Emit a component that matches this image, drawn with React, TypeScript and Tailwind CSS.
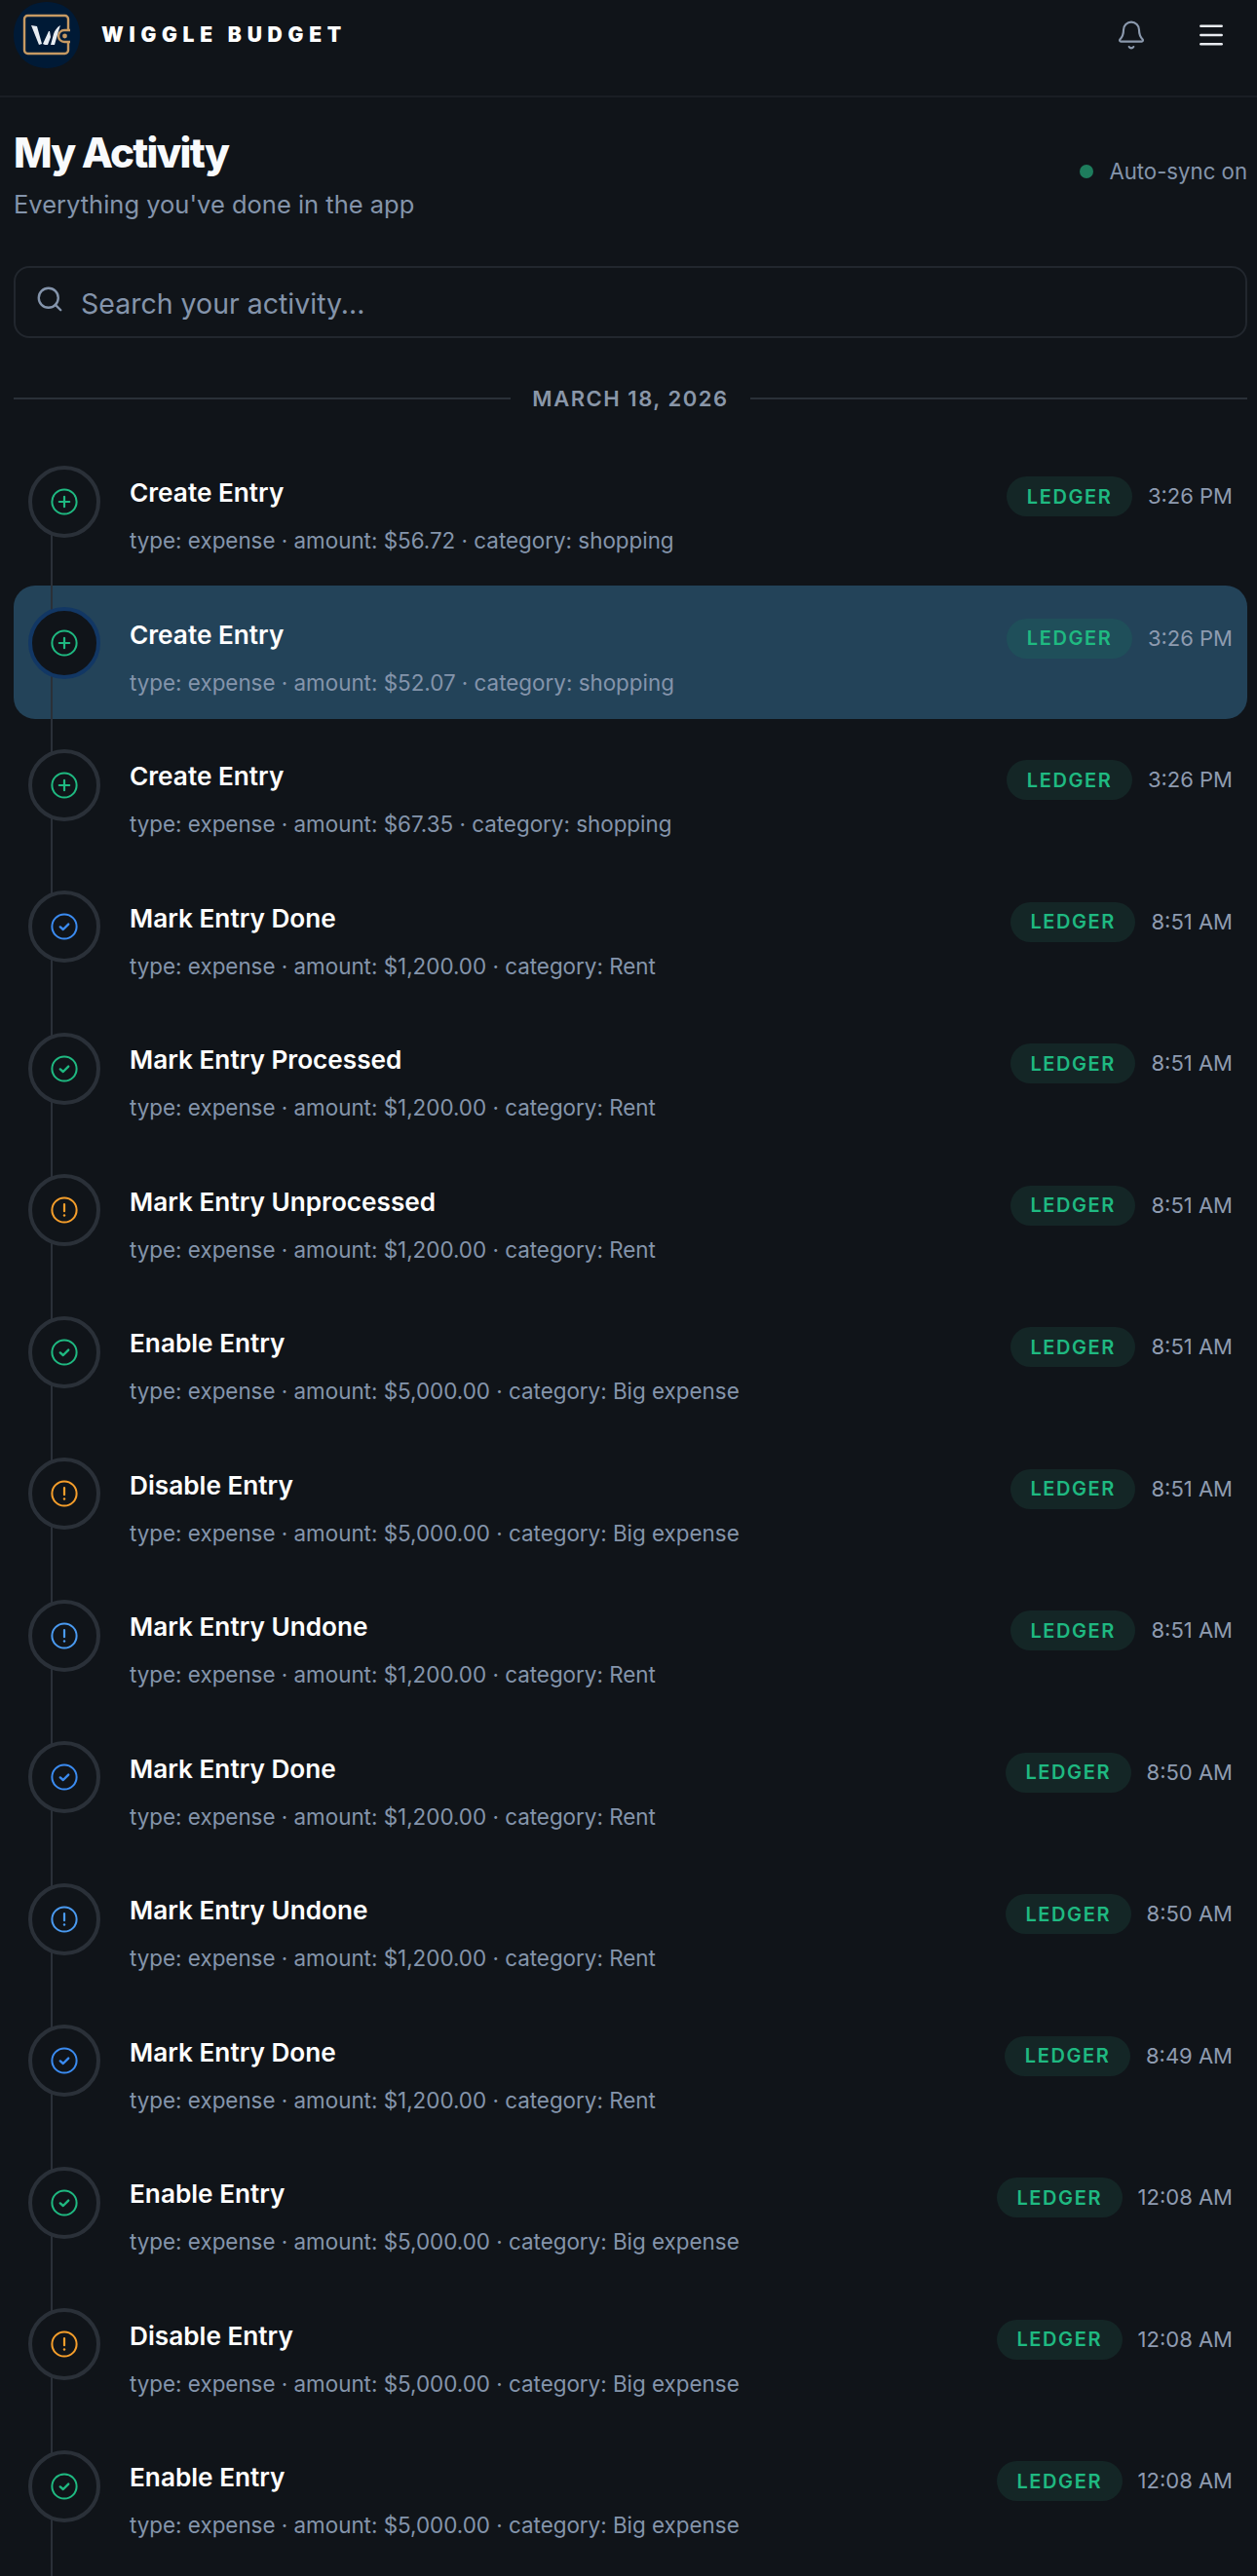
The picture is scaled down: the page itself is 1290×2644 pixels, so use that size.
import { Bell, Menu, Search } from 'lucide-react';

type Kind = 'plus' | 'check' | 'alert';

const rows: { title: string; detail: string; time: string; kind: Kind; color: string; active?: boolean }[] = [
  { title: 'Create Entry', detail: 'type: expense · amount: $56.72 · category: shopping', time: '3:26 PM', kind: 'plus', color: 'text-[#1fb981]' },
  { title: 'Create Entry', detail: 'type: expense · amount: $52.07 · category: shopping', time: '3:26 PM', kind: 'plus', color: 'text-[#1fb981]', active: true },
  { title: 'Create Entry', detail: 'type: expense · amount: $67.35 · category: shopping', time: '3:26 PM', kind: 'plus', color: 'text-[#1fb981]' },
  { title: 'Mark Entry Done', detail: 'type: expense · amount: $1,200.00 · category: Rent', time: '8:51 AM', kind: 'check', color: 'text-[#3b8bf0]' },
  { title: 'Mark Entry Processed', detail: 'type: expense · amount: $1,200.00 · category: Rent', time: '8:51 AM', kind: 'check', color: 'text-[#1fb981]' },
  { title: 'Mark Entry Unprocessed', detail: 'type: expense · amount: $1,200.00 · category: Rent', time: '8:51 AM', kind: 'alert', color: 'text-[#f59e2b]' },
  { title: 'Enable Entry', detail: 'type: expense · amount: $5,000.00 · category: Big expense', time: '8:51 AM', kind: 'check', color: 'text-[#1fb981]' },
  { title: 'Disable Entry', detail: 'type: expense · amount: $5,000.00 · category: Big expense', time: '8:51 AM', kind: 'alert', color: 'text-[#f59e2b]' },
  { title: 'Mark Entry Undone', detail: 'type: expense · amount: $1,200.00 · category: Rent', time: '8:51 AM', kind: 'alert', color: 'text-[#4a9af0]' },
  { title: 'Mark Entry Done', detail: 'type: expense · amount: $1,200.00 · category: Rent', time: '8:50 AM', kind: 'check', color: 'text-[#3b8bf0]' },
  { title: 'Mark Entry Undone', detail: 'type: expense · amount: $1,200.00 · category: Rent', time: '8:50 AM', kind: 'alert', color: 'text-[#4a9af0]' },
  { title: 'Mark Entry Done', detail: 'type: expense · amount: $1,200.00 · category: Rent', time: '8:49 AM', kind: 'check', color: 'text-[#3b8bf0]' },
  { title: 'Enable Entry', detail: 'type: expense · amount: $5,000.00 · category: Big expense', time: '12:08 AM', kind: 'check', color: 'text-[#1fb981]' },
  { title: 'Disable Entry', detail: 'type: expense · amount: $5,000.00 · category: Big expense', time: '12:08 AM', kind: 'alert', color: 'text-[#f59e2b]' },
  { title: 'Enable Entry', detail: 'type: expense · amount: $5,000.00 · category: Big expense', time: '12:08 AM', kind: 'check', color: 'text-[#1fb981]' },
];

function RowIcon({ kind }: { kind: Kind }) {
  return (
    <svg viewBox="0 0 28 28" className="h-[28px] w-[28px]" fill="none" stroke="currentColor" strokeWidth="2" strokeLinecap="round" strokeLinejoin="round">
      <circle cx="14" cy="14" r="12.6" />
      {kind === 'plus' && <path d="M14 8.8v10.4M8.8 14h10.4" strokeWidth="2.2" />}
      {kind === 'check' && <path d="M9.8 14.4l3 2.6 5.4-5.4" strokeWidth="2.4" />}
      {kind === 'alert' && (
        <>
          <path d="M14 8v7.2" strokeWidth="2.2" />
          <path d="M14 19.4v.1" strokeWidth="2.4" />
        </>
      )}
    </svg>
  );
}

function Logo() {
  return (
    <svg viewBox="0 0 68 68" className="h-[68px] w-[68px]">
      <path d="M34 0C54 0 68 14 68 34S54 68 34 68 0 54 0 34 14 0 34 0z" fill="#001a36" />
      <path d="M56 29V17.5a3.5 3.5 0 0 0-3.5-3.5h-38a3.5 3.5 0 0 0-3.5 3.5v32a3.5 3.5 0 0 0 3.5 3.5h38a3.5 3.5 0 0 0 3.5-3.5V41" fill="none" stroke="#c79a63" strokeWidth="2.4" />
      <path d="M58 29H52a6 6 0 0 0 0 12h6" fill="none" stroke="#c79a63" strokeWidth="2.4" />
      <circle cx="52.5" cy="35" r="2.4" fill="#c79a63" />
      <path d="M18 24l6 1 5 18-3 1zM30 43l6-13 1 0 1 6-3 8h-3zM38 44l3-11c1-3 3-7 7-9l-2 6-4 14z" fill="#e8edf2" />
    </svg>
  );
}

export default function App() {
  return (
    <div className="h-[2644px] overflow-hidden bg-[#101419] font-['Inter',sans-serif]">
      <header className="flex h-[100px] items-center justify-between border-b-2 border-[#1a1e24] pb-[26px] pl-[14px] pr-[31px]">
        <div className="flex items-center gap-[22px]">
          <Logo />
          <span className="text-[21px] font-black tracking-[0.275em] text-white">WIGGLE BUDGET</span>
        </div>
        <div className="flex items-center gap-[50px]">
          <Bell className="h-[32px] w-[32px] text-[#8b99ad]" strokeWidth={1.6} />
          <Menu className="h-[32px] w-[32px] text-[#e8ebf0]" strokeWidth={1.9} />
        </div>
      </header>

      <main className="pl-[14px] pr-[10px]">
        <div className="flex items-start justify-between pt-[29px]">
          <div>
            <h1 className="text-[42px] leading-[56px] font-extrabold tracking-[-0.043em] text-[#f8fafc]">My Activity</h1>
            <p className="mt-[7px] text-[25.5px] leading-[36px] text-[#8494ab]">Everything you've done in the app</p>
          </div>
          <div className="mt-[31px] flex items-center gap-[16px]">
            <span className="h-[14px] w-[14px] rounded-full bg-[#1e7d5d]" />
            <span className="text-[22.2px] leading-[32px] text-[#8494ab]">Auto-sync on</span>
          </div>
        </div>

        <div className="mt-[45px] flex h-[74px] items-center gap-[17.5px] rounded-[16px] border-2 border-[#22272e] pl-[19.5px]">
          <Search className="h-[30px] w-[30px] -translate-y-[3px] text-[#8494ab]" strokeWidth={1.9} />
          <span className="translate-y-[2px] text-[28.5px] text-[#8494ab]">Search your activity...</span>
        </div>

        <div className="mt-[51px] flex items-center gap-[22px]">
          <div className="h-[2px] flex-1 bg-[#2a3038]" />
          <span className="text-[22px] leading-[22px] font-semibold tracking-[0.07em] text-[#8a97a9]">MARCH 18, 2026</span>
          <div className="h-[2px] flex-1 bg-[#2a3038]" />
        </div>

        <div className="relative mt-[35px] flex flex-col gap-[8.5px]">
          <div className="absolute bottom-[-40px] left-[38px] top-[60px] z-10 w-[2px] bg-[#2a3038]" />
          {rows.map((row, i) => (
            <div key={i} className={`relative flex h-[137px] items-start gap-[30px] rounded-[22px] pl-[15px] pr-[15px] pt-[22.5px] ${row.active ? 'bg-[#234359]' : ''}`}>
              <div className={`relative z-20 flex h-[74px] w-[74px] shrink-0 items-center justify-center rounded-full border-[4px] bg-[#101419] ${row.active ? 'border-[#123764]' : 'border-[#2a3038]'} ${row.color}`}>
                <RowIcon kind={row.kind} />
              </div>
              <div className="flex-1 pt-[9.5px]">
                <div className="flex h-[38px] items-start justify-between">
                  <span className="text-[26.2px] leading-[38px] font-semibold text-white">{row.title}</span>
                  <div className="mt-[2px] flex items-center gap-[16px]">
                    <span className={`flex h-[41px] items-center rounded-full px-[20.5px] text-[20px] font-semibold tracking-[0.08em] text-[#1fb981] ${row.active ? 'bg-[#1f4f5a]' : 'bg-[#142626]'}`}>LEDGER</span>
                    <span className="text-[22px] text-[#8e9bb0]">{row.time}</span>
                  </div>
                </div>
                <p className="mt-[12px] text-[22.4px] leading-[36px] text-[#8494ab]">{row.detail}</p>
              </div>
            </div>
          ))}
        </div>
      </main>
    </div>
  );
}
